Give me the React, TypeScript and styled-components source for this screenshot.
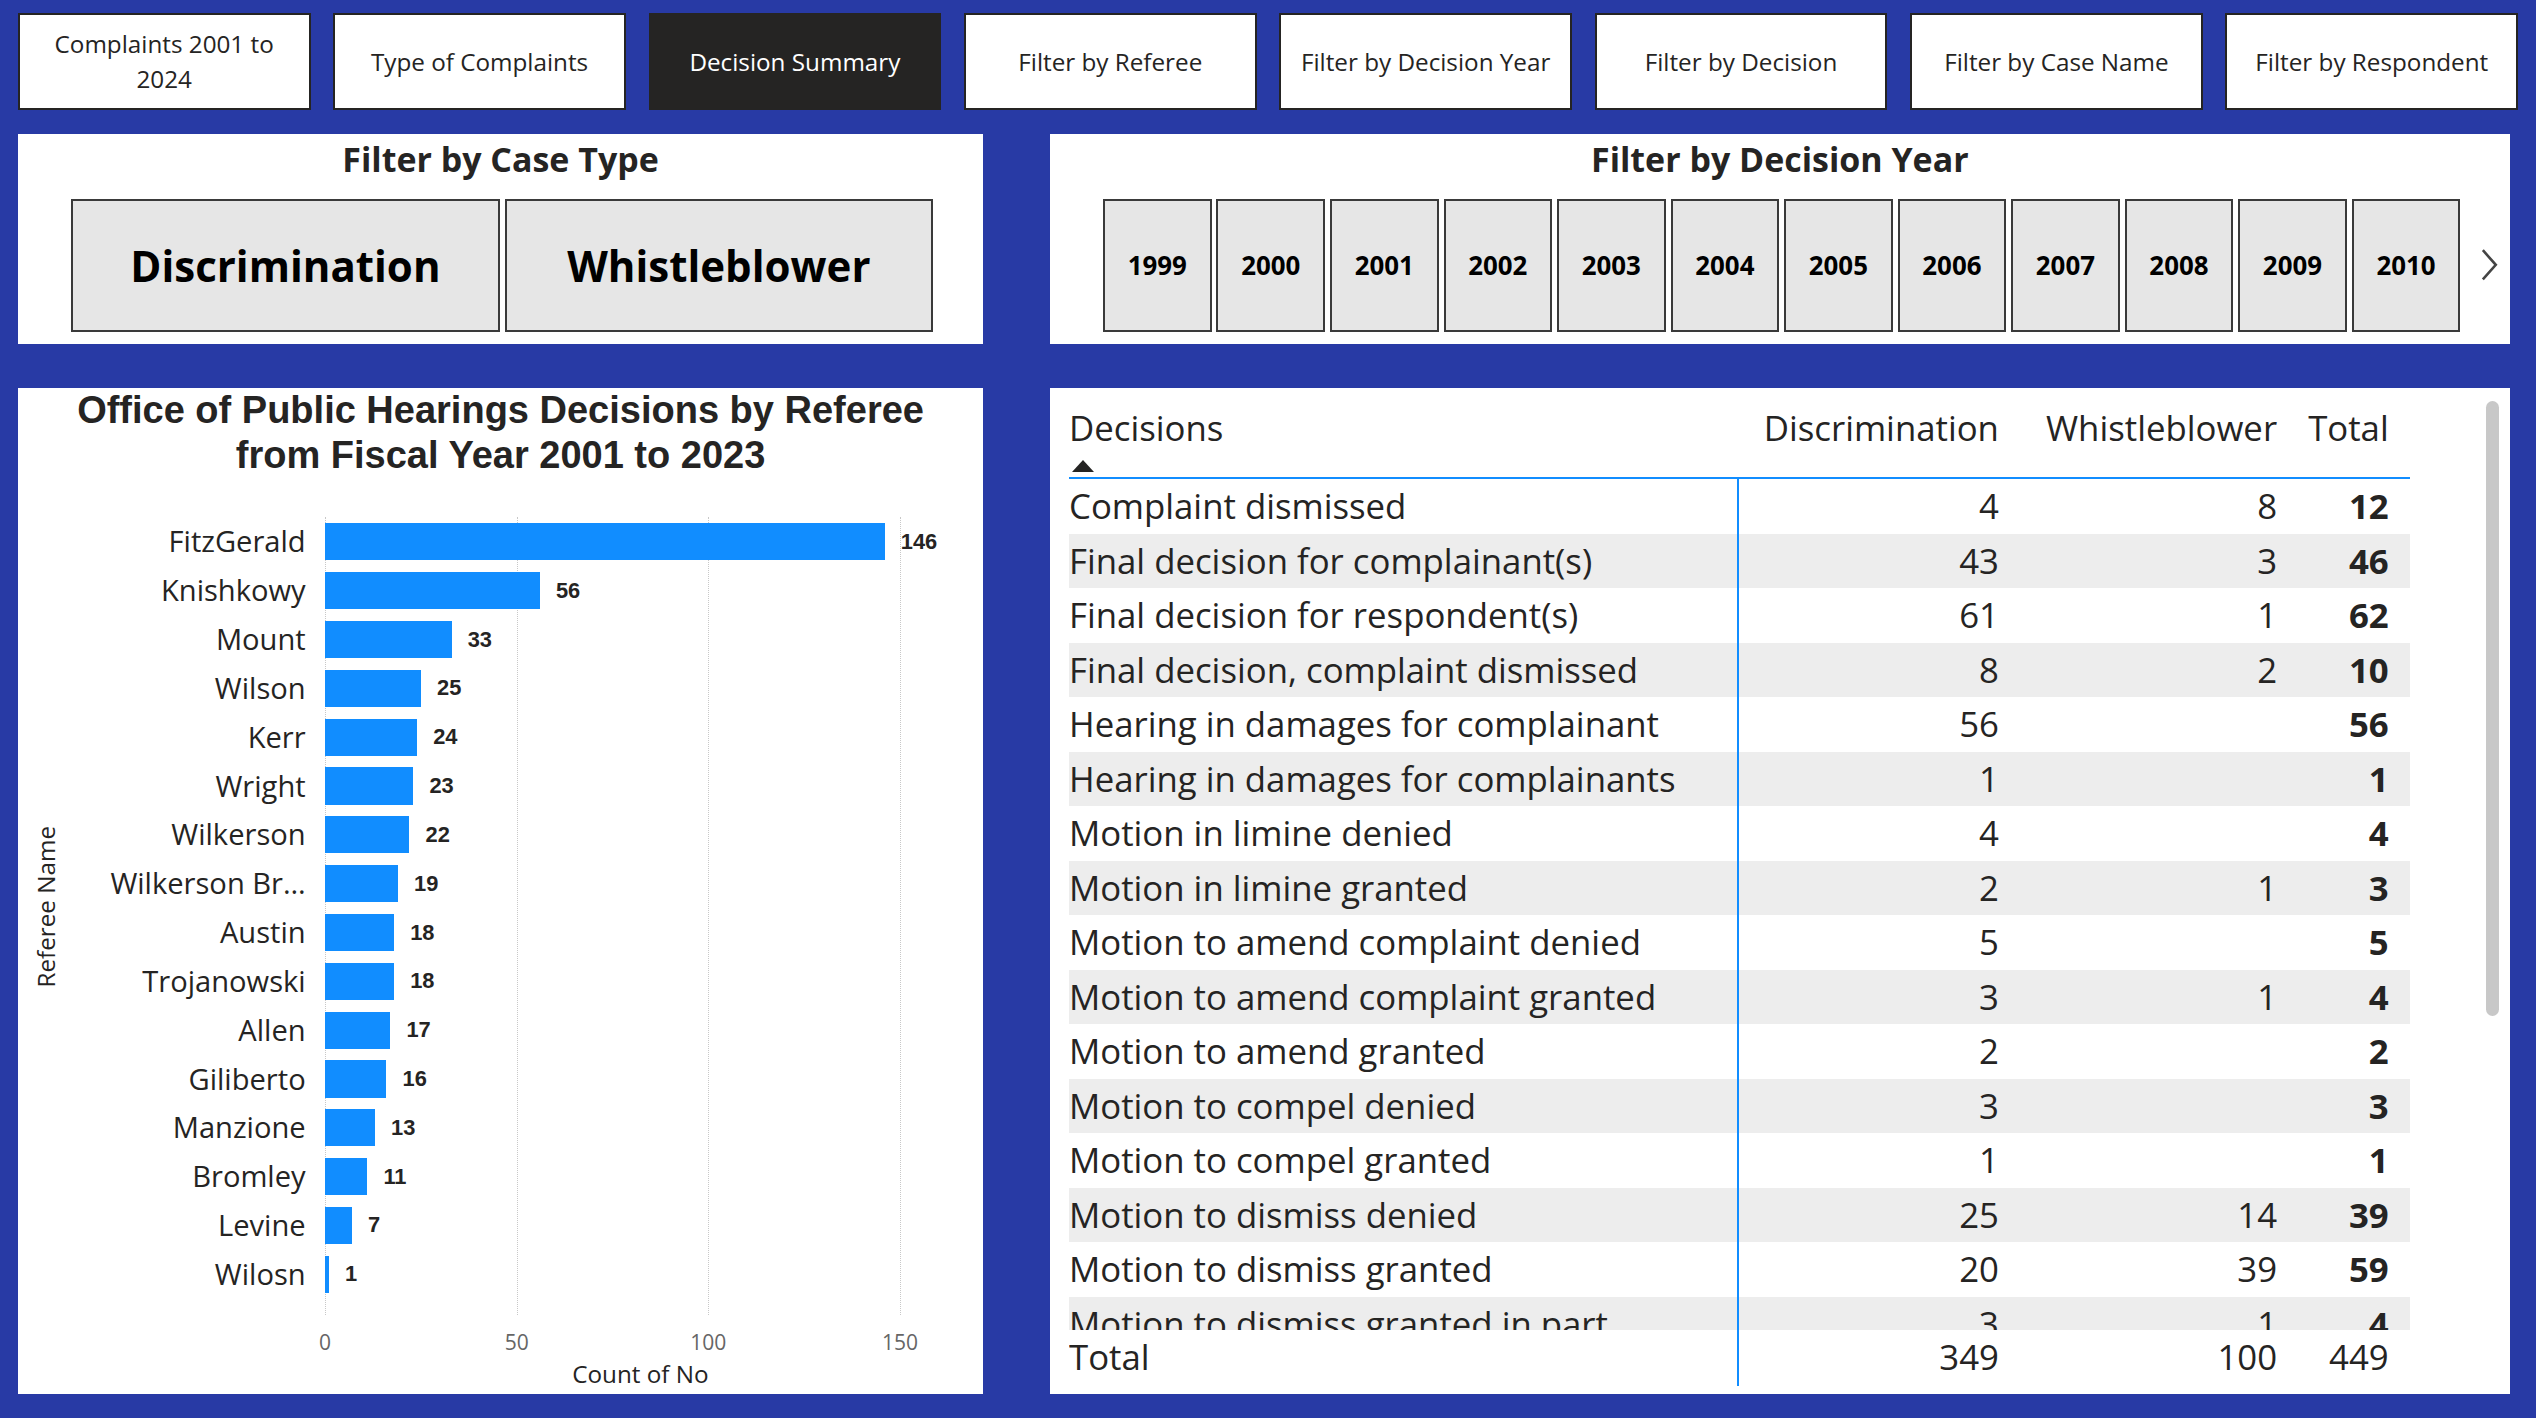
import styled, { createGlobalStyle } from 'styled-components';

const Global = createGlobalStyle`
  html, body { margin: 0; padding: 0; background: #283aa5; overflow: hidden; }
`;

const Page = styled.div`
  zoom: 1.6173;
  width: 1568px;
  height: 877px;
  background: #283aa5;
  font-family: 'Open Sans', 'Noto Sans', sans-serif;
  color: #252423;
  box-sizing: border-box;
  padding: 8px 11px 0 11px;
  display: flex;
  flex-direction: column;
`;

const Nav = styled.div`
  display: flex;
  gap: 14px;
  height: 60px;
`;

const NavButton = styled.div<{ $active?: boolean }>`
  width: 182px;
  box-sizing: border-box;
  border: 1.5px solid #252423;
  background: ${p => (p.$active ? '#252423' : '#fff')};
  color: ${p => (p.$active ? '#fff' : '#252423')};
  display: flex;
  align-items: center;
  justify-content: center;
  text-align: center;
  font-size: 15px;
  line-height: 22px;
  padding: 0 6px;
`;

const Row = styled.div<{ $h: number; $mt: number }>`
  display: flex;
  gap: 41px;
  height: ${p => p.$h}px;
  margin-top: ${p => p.$mt}px;
`;

const Panel = styled.div<{ $w: number }>`
  background: #fff;
  width: ${p => p.$w}px;
  box-sizing: border-box;
  display: flex;
  flex-direction: column;
  position: relative;
`;

const SlicerTitle = styled.div`
  text-align: center;
  font-weight: 700;
  font-size: 21px;
  line-height: 28px;
  padding-top: 2px;
`;

const ButtonRow = styled.div`
  display: flex;
  gap: 3px;
  padding: 10px 0 0 33px;
  align-items: center;
`;

const CaseBtn = styled.div`
  width: 265px;
  height: 82px;
  box-sizing: border-box;
  border: 1.5px solid #3a3a3a;
  background: #e6e6e6;
  display: flex;
  align-items: center;
  justify-content: center;
  font-weight: 700;
  font-size: 26px;
  color: #000;
`;

const YearBtn = styled.div`
  width: 67.2px;
  height: 82px;
  box-sizing: border-box;
  border: 1.5px solid #3a3a3a;
  background: #e6e6e6;
  display: flex;
  align-items: center;
  justify-content: center;
  font-weight: 700;
  font-size: 16px;
  color: #000;
`;

const Chevron = styled.div`
  margin-left: 8px;
  display: flex;
`;

const ChartTitle = styled.div`
  font-family: 'Liberation Sans', Arial, sans-serif;
  font-weight: 700;
  font-size: 23.5px;
  line-height: 28px;
  text-align: center;
`;

const ChartBody = styled.div`
  display: flex;
  flex: 1;
  padding-top: 24px;
`;

const YAxisTitle = styled.div`
  width: 34px;
  display: flex;
  align-items: center;
  justify-content: center;
  font-size: 15px;
  writing-mode: vertical-rl;
  transform: rotate(180deg);
  padding-top: 60px;
`;

const Plot = styled.div`
  flex: 1;
  display: flex;
  flex-direction: column;
`;

const Bars = styled.div`
  display: grid;
  grid-template-columns: 156px 1fr;
  grid-auto-rows: 30.2px;
  position: relative;
`;

const Label = styled.div`
  text-align: right;
  padding-right: 12px;
  font-size: 18px;
  line-height: 30px;
  white-space: nowrap;
`;

const BarCell = styled.div`
  display: flex;
  align-items: center;
  gap: 10px;
  position: relative;
  z-index: 1;
`;

const Bar = styled.div`
  height: 23px;
  background: #118dff;
`;

const BarValue = styled.span`
  font-family: 'Liberation Sans', Arial, sans-serif;
  font-weight: 700;
  font-size: 13.5px;
`;

const GridLine = styled.div<{ $x: number }>`
  position: absolute;
  top: 0;
  bottom: -10px;
  left: ${p => 156 + p.$x}px;
  border-left: 1px dotted #c8c8c8;
`;

const Ticks = styled.div`
  position: relative;
  height: 20px;
  margin-top: 18px;
  margin-left: 156px;
  font-size: 13px;
  color: #666;
`;

const Tick = styled.span<{ $x: number }>`
  position: absolute;
  left: ${p => p.$x}px;
  transform: translateX(-50%);
`;

const XTitle = styled.div`
  margin-left: 156px;
  width: 390px;
  text-align: center;
  font-size: 15px;
  margin-top: -2px;
`;

const Table = styled.div`
  padding: 8px 62px 0 12px;
  display: flex;
  flex-direction: column;
  flex: 1;
  overflow: hidden;
  position: relative;
`;

const HeadRow = styled.div`
  display: grid;
  grid-template-columns: 413px 168px 172px 69px;
  height: 47px;
  border-bottom: 1.5px solid #118dff;
  font-weight: 700;
  font-size: 21.5px;
  flex-shrink: 0;
  position: relative;
`;

const SortArrow = styled.div`
  position: absolute;
  left: 2px;
  bottom: 3px;
  width: 0;
  height: 0;
  border-left: 7px solid transparent;
  border-right: 7px solid transparent;
  border-bottom: 8px solid #252423;
`;

const Body = styled.div`
  height: 526px;
  overflow: hidden;
  position: relative;
`;

const TRow = styled.div<{ $alt?: boolean }>`
  display: grid;
  grid-template-columns: 413px 168px 172px 69px;
  height: 33.7px;
  background: ${p => (p.$alt ? '#ededed' : 'transparent')};
  font-size: 21.5px;
`;

const Cell = styled.div<{ $num?: boolean; $bold?: boolean }>`
  text-align: ${p => (p.$num ? 'right' : 'left')};
  font-weight: ${p => (p.$bold ? 700 : 400)};
  padding-right: 6px;
  white-space: nowrap;
  line-height: 34px;
  overflow: hidden;
`;

const TotalRow = styled(TRow)`
  height: 36px;
  font-weight: 700;
`;

const Divider = styled.div`
  position: absolute;
  left: 425px;
  top: 55px;
  bottom: 5px;
  border-left: 1.5px solid #118dff;
`;

const ScrollTrack = styled.div`
  position: absolute;
  right: 7px;
  top: 8px;
  width: 8px;
  height: 380px;
  border-radius: 4px;
  background: #c8c8c8;
`;

const navItems = [
  'Complaints 2001 to 2024',
  'Type of Complaints',
  'Decision Summary',
  'Filter by Referee',
  'Filter by Decision Year',
  'Filter by Decision',
  'Filter by Case Name',
  'Filter by Respondent',
];

const years = ['1999', '2000', '2001', '2002', '2003', '2004', '2005', '2006', '2007', '2008', '2009', '2010'];

const referees: [string, number][] = [
  ['FitzGerald', 146],
  ['Knishkowy', 56],
  ['Mount', 33],
  ['Wilson', 25],
  ['Kerr', 24],
  ['Wright', 23],
  ['Wilkerson', 22],
  ['Wilkerson Br…', 19],
  ['Austin', 18],
  ['Trojanowski', 18],
  ['Allen', 17],
  ['Giliberto', 16],
  ['Manzione', 13],
  ['Bromley', 11],
  ['Levine', 7],
  ['Wilosn', 1],
];

const scale = 2.37;

const decisions: [string, string, string, string][] = [
  ['Complaint dismissed', '4', '8', '12'],
  ['Final decision for complainant(s)', '43', '3', '46'],
  ['Final decision for respondent(s)', '61', '1', '62'],
  ['Final decision, complaint dismissed', '8', '2', '10'],
  ['Hearing in damages for complainant', '56', '', '56'],
  ['Hearing in damages for complainants', '1', '', '1'],
  ['Motion in limine denied', '4', '', '4'],
  ['Motion in limine granted', '2', '1', '3'],
  ['Motion to amend complaint denied', '5', '', '5'],
  ['Motion to amend complaint granted', '3', '1', '4'],
  ['Motion to amend granted', '2', '', '2'],
  ['Motion to compel denied', '3', '', '3'],
  ['Motion to compel granted', '1', '', '1'],
  ['Motion to dismiss denied', '25', '14', '39'],
  ['Motion to dismiss granted', '20', '39', '59'],
  ['Motion to dismiss granted in part', '3', '1', '4'],
];

export default function App() {
  return (
    <Page>
      <Global />
      <Nav>
        {navItems.map(n => (
          <NavButton key={n} $active={n === 'Decision Summary'}>
            {n}
          </NavButton>
        ))}
      </Nav>

      <Row $h={130} $mt={15}>
        <Panel $w={597}>
          <SlicerTitle>Filter by Case Type</SlicerTitle>
          <ButtonRow>
            <CaseBtn>Discrimination</CaseBtn>
            <CaseBtn>Whistleblower</CaseBtn>
          </ButtonRow>
        </Panel>
        <Panel $w={903}>
          <SlicerTitle>Filter by Decision Year</SlicerTitle>
          <ButtonRow>
            {years.map(y => (
              <YearBtn key={y}>{y}</YearBtn>
            ))}
            <Chevron>
              <svg width="14" height="22" viewBox="0 0 14 22">
                <path d="M3 2 L11 11 L3 20" fill="none" stroke="#444" strokeWidth="1.6" />
              </svg>
            </Chevron>
          </ButtonRow>
        </Panel>
      </Row>

      <Row $h={622} $mt={27}>
        <Panel $w={597}>
          <ChartTitle>
            Office of Public Hearings Decisions by Referee
            <br />
            from Fiscal Year 2001 to 2023
          </ChartTitle>
          <ChartBody>
            <YAxisTitle>Referee Name</YAxisTitle>
            <Plot>
              <Bars>
                {[0, 50, 100, 150].map(t => (
                  <GridLine key={t} $x={t * scale} />
                ))}
                {referees.map(([name, v]) => (
                  <>
                    <Label key={name + 'l'}>{name}</Label>
                    <BarCell key={name + 'b'}>
                      <Bar style={{ width: `${Math.max(v * scale, 2)}px` }} />
                      <BarValue>{v}</BarValue>
                    </BarCell>
                  </>
                ))}
              </Bars>
              <Ticks>
                {[0, 50, 100, 150].map(t => (
                  <Tick key={t} $x={t * scale}>
                    {t}
                  </Tick>
                ))}
              </Ticks>
              <XTitle>Count of No</XTitle>
            </Plot>
          </ChartBody>
        </Panel>

        <Panel $w={903}>
          <Table>
            <HeadRow>
              <Cell>Decisions</Cell>
              <Cell $num>Discrimination</Cell>
              <Cell $num>Whistleblower</Cell>
              <Cell $num>Total</Cell>
              <SortArrow />
            </HeadRow>
            <Body>
              {decisions.map((d, i) => (
                <TRow key={d[0]} $alt={i % 2 === 1}>
                  <Cell>{d[0]}</Cell>
                  <Cell $num>{d[1]}</Cell>
                  <Cell $num>{d[2]}</Cell>
                  <Cell $num $bold>
                    {d[3]}
                  </Cell>
                </TRow>
              ))}
            </Body>
            <TotalRow>
              <Cell>Total</Cell>
              <Cell $num>349</Cell>
              <Cell $num>100</Cell>
              <Cell $num>449</Cell>
            </TotalRow>
            <Divider />
          </Table>
          <ScrollTrack />
        </Panel>
      </Row>
    </Page>
  );
}
